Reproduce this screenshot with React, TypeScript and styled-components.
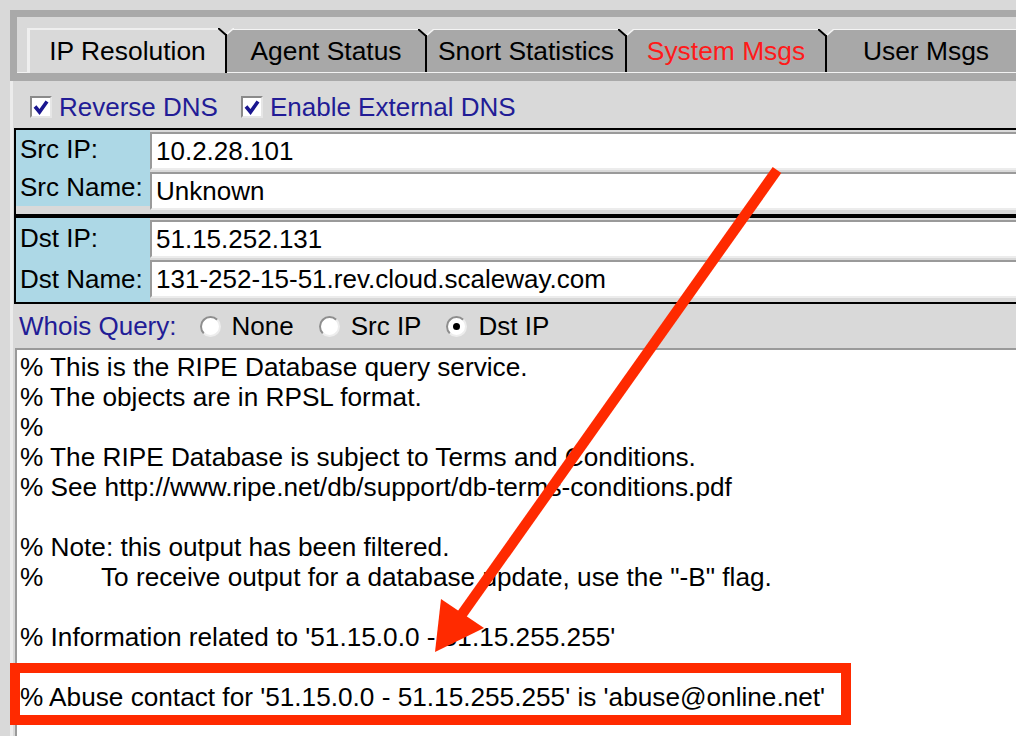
import React from 'react';
import styled, { createGlobalStyle } from 'styled-components';

const GlobalStyle = createGlobalStyle`
  html, body { margin: 0; padding: 0; background: #d9d9d9; overflow: hidden; }
  body { font-family: "Liberation Sans", Arial, sans-serif; }
`;

const Page = styled.div`
  position: relative;
  width: 1016px;
  height: 736px;
  overflow: hidden;
  box-sizing: border-box;
  padding: 10px 0 0 10px;
  font-family: "Liberation Sans", Arial, sans-serif;
  font-size: 26px;
  background: #d9d9d9;
`;

const Window = styled.div`
  width: 1120px;
`;

const TabFrame = styled.div`
  border-top: 7px solid #a9a9a9;
  border-left: 7px solid #a9a9a9;
  border-bottom: 8px solid #a9a9a9;
  padding-top: 11px;
  background: #d9d9d9;
`;

const TabRow = styled.div`
  display: flex;
  align-items: flex-end;
  padding-left: 10px;
  border-bottom: 1px solid #f2f2f2;
`;

const Tab = styled.div<{ $active?: boolean; $alert?: boolean }>`
  position: relative;
  box-sizing: border-box;
  flex: none;
  width: 200px;
  height: ${p => (p.$active ? '45px' : '43px')};
  margin-bottom: ${p => (p.$active ? '-1px' : '0')};
  display: flex;
  align-items: center;
  justify-content: center;
  background: ${p => (p.$active ? '#d9d9d9' : '#a8a8a8')};
  border-top: ${p => (p.$active ? '2px solid #efefef' : '1px solid #f4f4f4')};
  border-left: ${p => (p.$active ? '3px solid #efefef' : '0')};
  border-right: 2px solid #000;
  color: ${p => (p.$alert ? '#ff1a1a' : '#000')};
  font-size: 26.4px;
`;

const Notch = styled.svg<{ $top: number }>`
  position: absolute;
  right: -9px;
  top: ${p => -p.$top}px;
  width: 16px;
  height: 8px;
  z-index: 1;
`;

const Content = styled.div`
  border-left: 3px solid #ececec;
  padding-left: 1px;
  background: #d9d9d9;
`;

const OptionsRow = styled.div`
  box-sizing: border-box;
  height: 47px;
  display: flex;
  align-items: center;
  padding: 5px 0 0 16px;
`;

const CheckItem = styled.label`
  display: flex;
  align-items: center;
  gap: 7px;
  margin-right: 23px;
  color: #221c96;
`;

const CheckBox = styled.span`
  box-sizing: border-box;
  width: 22px;
  height: 22px;
  display: flex;
  align-items: center;
  justify-content: center;
  background: #fff;
  border: 2px solid;
  border-color: #8a8a8a #e6e6e6 #e6e6e6 #8a8a8a;
`;

const FieldBox = styled.div`
  display: flex;
  border: 2px solid #000;
  border-right: 0;
`;

const LabelCol = styled.div<{ $fill?: boolean }>`
  flex: none;
  width: 134px;
  background: #add8e6;
  align-self: ${p => (p.$fill ? 'stretch' : 'flex-start')};
  display: flex;
  flex-direction: column;
`;

const LabelRow = styled.div<{ $h: number }>`
  height: ${p => p.$h}px;
  display: flex;
  align-items: center;
  padding-left: 4px;
  color: #000;
  white-space: nowrap;
`;

const InputCol = styled.div`
  flex: 1;
  display: flex;
  flex-direction: column;
  gap: 2px;
  padding: 2px 0 4px 0;
`;

const Field = styled.div`
  box-sizing: border-box;
  height: 38px;
  display: flex;
  align-items: center;
  padding-left: 4px;
  background: #fff;
  border: 2px solid;
  border-color: #9a9a9a #ececec #ececec #9a9a9a;
  color: #000;
  white-space: nowrap;
`;

const WhoisRow = styled.div`
  height: 44px;
  display: flex;
  align-items: center;
  padding-left: 5px;
  color: #221c96;
`;

const WhoisLabel = styled.span`
  margin-right: 23px;
`;

const RadioItem = styled.label`
  display: flex;
  align-items: center;
  gap: 11px;
  margin-right: 25px;
  color: #000;
`;

const Radio = styled.span<{ $on?: boolean }>`
  box-sizing: border-box;
  width: 21px;
  height: 21px;
  border-radius: 50%;
  background: #fff;
  border: 2px solid;
  border-color: #8e8e8e #ededed #ededed #8e8e8e;
  display: flex;
  align-items: center;
  justify-content: center;
  &::after {
    content: '';
    width: 7px;
    height: 7px;
    border-radius: 50%;
    background: ${p => (p.$on ? '#000' : 'transparent')};
  }
`;

const Output = styled.pre`
  margin: 0 0 0 1px;
  height: 600px;
  background: #fff;
  border-top: 2px solid #9a9a9a;
  border-left: 2px solid #9a9a9a;
  padding: 2px 0 0 3px;
  font-family: "Liberation Sans", Arial, sans-serif;
  font-size: 26.2px;
  line-height: 30px;
  color: #000;
  white-space: pre;
  tab-size: 81px;
`;

const Overlay = styled.svg`
  position: absolute;
  left: 0;
  top: 0;
  width: 1016px;
  height: 736px;
  pointer-events: none;
`;

const tabs = [
  { label: 'IP Resolution', active: true },
  { label: 'Agent Status' },
  { label: 'Snort Statistics' },
  { label: 'System Msgs', alert: true },
  { label: 'User Msgs' },
];

const whoisText = [
  '% This is the RIPE Database query service.',
  '% The objects are in RPSL format.',
  '%',
  '% The RIPE Database is subject to Terms and Conditions.',
  '% See http://www.ripe.net/db/support/db-terms-conditions.pdf',
  '',
  '% Note: this output has been filtered.',
  '%\tTo receive output for a database update, use the "-B" flag.',
  '',
  "% Information related to '51.15.0.0 - 51.15.255.255'",
  '',
  "% Abuse contact for '51.15.0.0 - 51.15.255.255' is 'abuse@online.net'",
  '',
].join('\n');

const Check = () => (
  <svg width="18" height="18" viewBox="0 0 18 18">
    <path d="M3 8.5 L7.5 14 L15 3.5" fill="none" stroke="#1a1690" strokeWidth="3.6" />
  </svg>
);

export default function App() {
  return (
    <Page>
      <GlobalStyle />
      <Window>
        <TabFrame>
          <TabRow>
            {tabs.map(t => (
              <Tab key={t.label} $active={t.active} $alert={t.alert}>
                {t.label}
                <Notch $top={t.active ? 2 : 1} viewBox="0 0 16 8">
                  <polygon points="0,0 8,7 16,0" fill="#d9d9d9" />
                  <line x1="0" y1="0" x2="8" y2="7" stroke="#000" strokeWidth="2" />
                  <line x1="8" y1="7" x2="16" y2="0" stroke="#f4f4f4" strokeWidth="1.5" />
                  <line x1="8" y1="6" x2="8" y2="8" stroke="#000" strokeWidth="2" />
                </Notch>
              </Tab>
            ))}
          </TabRow>
        </TabFrame>
        <Content>
          <OptionsRow>
            <CheckItem>
              <CheckBox><Check /></CheckBox>
              Reverse DNS
            </CheckItem>
            <CheckItem>
              <CheckBox><Check /></CheckBox>
              Enable External DNS
            </CheckItem>
          </OptionsRow>
          <FieldBox>
            <LabelCol>
              <LabelRow $h={38}>Src IP:</LabelRow>
              <LabelRow $h={38}>Src Name:</LabelRow>
            </LabelCol>
            <InputCol>
              <Field>10.2.28.101</Field>
              <Field>Unknown</Field>
            </InputCol>
          </FieldBox>
          <FieldBox>
            <LabelCol $fill>
              <LabelRow $h={41}>Dst IP:</LabelRow>
              <LabelRow $h={41}>Dst Name:</LabelRow>
            </LabelCol>
            <InputCol>
              <Field>51.15.252.131</Field>
              <Field>131-252-15-51.rev.cloud.scaleway.com</Field>
            </InputCol>
          </FieldBox>
          <WhoisRow>
            <WhoisLabel>Whois Query:</WhoisLabel>
            <RadioItem><Radio />None</RadioItem>
            <RadioItem><Radio />Src IP</RadioItem>
            <RadioItem><Radio $on />Dst IP</RadioItem>
          </WhoisRow>
          <Output>{whoisText}</Output>
        </Content>
      </Window>
      <Overlay viewBox="0 0 1016 736">
        <line x1="777" y1="170" x2="460" y2="617" stroke="#ff2a00" strokeWidth="10.5" />
        <polygon points="435,652 441,599 484,628" fill="#ff2a00" />
        <rect x="15" y="668" width="831" height="52" fill="none" stroke="#ff2a00" strokeWidth="10" />
      </Overlay>
    </Page>
  );
}
